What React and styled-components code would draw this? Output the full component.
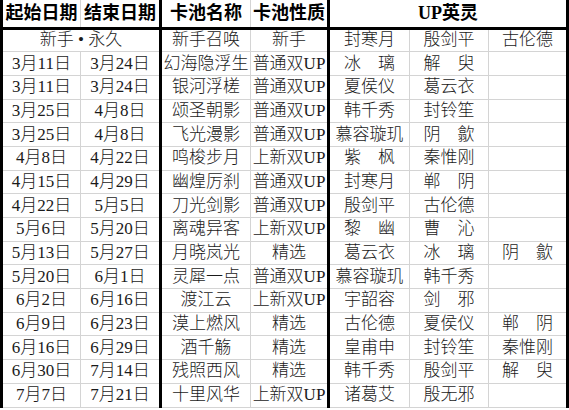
import styled, { createGlobalStyle } from "styled-components";

const GlobalStyle = createGlobalStyle`
  html, body {
    margin: 0;
    padding: 0;
    background: #ffffff;
  }
`;

const Table = styled.table`
  width: 569px;
  border-collapse: collapse;
  table-layout: fixed;
  border-left: 3px solid #000;
  border-right: 3px solid #000;
  font-family: "Liberation Serif", "Noto Sans CJK SC", serif;
  color: #1a1a1a;
`;

const HeadRow = styled.tr`
  height: 28px;
`;

const Row = styled.tr`
  height: 23.7px;
`;

const HeadCell = styled.th`
  padding: 0;
  font-size: 18px;
  font-weight: 700;
  color: #000;
  text-align: center;
  white-space: nowrap;
  border-bottom: 3px solid #000;
  border-left: ${(p) => (p.$thick ? "3px solid #000" : "1px solid #d4d4d4")};
  line-height: 20px;
`;

const Cell = styled.td`
  padding: 0;
  font-size: 17px;
  font-weight: 300;
  text-align: center;
  white-space: nowrap;
  overflow: hidden;
  line-height: 20px;
  border-top: 1px solid #d4d4d4;
  border-bottom: 1px solid #d4d4d4;
  border-left: ${(p) => (p.$thick ? "3px solid #000" : "1px solid #d4d4d4")};
`;

const rows = [
  ["3月11日", "3月24日", "幻海隐浮生", "普通双UP", "冰　璃", "解　臾", ""],
  ["3月11日", "3月24日", "银河浮槎", "普通双UP", "夏侯仪", "葛云衣", ""],
  ["3月25日", "4月8日", "颂圣朝影", "普通双UP", "韩千秀", "封铃笙", ""],
  ["3月25日", "4月8日", "飞光漫影", "普通双UP", "慕容璇玑", "阴　歙", ""],
  ["4月8日", "4月22日", "鸣梭步月", "上新双UP", "紫　枫", "秦惟刚", ""],
  ["4月15日", "4月29日", "幽煌厉刹", "普通双UP", "封寒月", "郸　阴", ""],
  ["4月22日", "5月5日", "刀光剑影", "普通双UP", "殷剑平", "古伦德", ""],
  ["5月6日", "5月20日", "离魂异客", "上新双UP", "黎　幽", "曹　沁", ""],
  ["5月13日", "5月27日", "月晓岚光", "精选", "葛云衣", "冰　璃", "阴　歙"],
  ["5月20日", "6月1日", "灵犀一点", "普通双UP", "慕容璇玑", "韩千秀", ""],
  ["6月2日", "6月16日", "渡江云", "上新双UP", "宇韶容", "剑　邪", ""],
  ["6月9日", "6月23日", "漠上燃风", "精选", "古伦德", "夏侯仪", "郸　阴"],
  ["6月16日", "6月29日", "酒千觞", "精选", "皇甫申", "封铃笙", "秦惟刚"],
  ["6月30日", "7月14日", "残照西风", "精选", "韩千秀", "殷剑平", "解　臾"],
  ["7月7日", "7月21日", "十里风华", "上新双UP", "诸葛艾", "殷无邪", ""],
];

const thickCols = [2, 4];

export default function App() {
  return (
    <>
      <GlobalStyle />
      <Table>
        <colgroup>
          <col style={{ width: 79 }} />
          <col style={{ width: 80 }} />
          <col style={{ width: 90 }} />
          <col style={{ width: 78 }} />
          <col style={{ width: 81 }} />
          <col style={{ width: 79 }} />
          <col style={{ width: 79 }} />
        </colgroup>
        <thead>
          <HeadRow>
            <HeadCell>起始日期</HeadCell>
            <HeadCell>结束日期</HeadCell>
            <HeadCell $thick>卡池名称</HeadCell>
            <HeadCell>卡池性质</HeadCell>
            <HeadCell $thick colSpan={3}>
              UP英灵
            </HeadCell>
          </HeadRow>
        </thead>
        <tbody>
          <Row>
            <Cell colSpan={2}>新手 • 永久</Cell>
            <Cell $thick>新手召唤</Cell>
            <Cell>新手</Cell>
            <Cell $thick>封寒月</Cell>
            <Cell>殷剑平</Cell>
            <Cell>古伦德</Cell>
          </Row>
          {rows.map((r, i) => (
            <Row key={i}>
              {r.map((v, j) => (
                <Cell key={j} $thick={thickCols.includes(j)}>
                  {v}
                </Cell>
              ))}
            </Row>
          ))}
        </tbody>
      </Table>
    </>
  );
}
